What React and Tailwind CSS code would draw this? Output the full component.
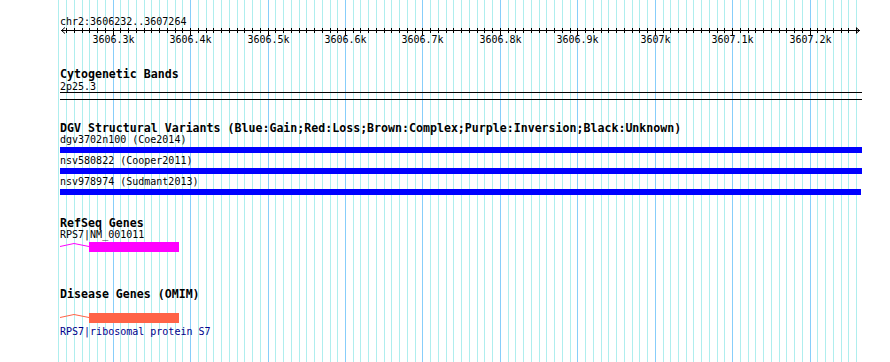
import React from "react";

const START = 3606232;
const px = (bp) => Math.floor(60.5 + (bp - START) * 0.77444);

const gridBps = [];
for (let b = 3606230; b <= 3607260; b += 10) gridBps.push(b);
const tickBps = gridBps.filter((b) => b >= 3606240);
const majors = [];
for (let b = 3606300; b <= 3607200; b += 100) majors.push(b);
const fmt = (b) => {
  const k = (b / 1000).toFixed(1);
  return (k.endsWith(".0") ? k.slice(0, -2) : k) + "k";
};

const MONO = "'DejaVu Sans Mono', 'Liberation Mono', monospace";

function Grid() {
  return (
    <svg className="absolute inset-0" width="890" height="362">
      {gridBps.map((b) => (
        <line
          key={b}
          x1={px(b) + 0.5}
          x2={px(b) + 0.5}
          y1={0}
          y2={362}
          stroke={b % 100 === 0 ? "#87cefa" : "#afeeee"}
          strokeWidth="1"
        />
      ))}
    </svg>
  );
}

function Ruler() {
  return (
    <svg width="890" height="48" className="block" style={{ fontFamily: MONO }}>
      <text x="60" y="25" fontSize="10" fill="#000">
        chr2:3606232..3607264
      </text>
      <line x1="61" x2="860" y1="30.5" y2="30.5" stroke="#000" />
      <polyline points="65,27.5 61.5,30.5 65,33.5" fill="none" stroke="#000" />
      <polyline points="856,27.5 859.5,30.5 856,33.5" fill="none" stroke="#000" />
      {tickBps.map((b) => (
        <line
          key={b}
          x1={px(b) + 0.5}
          x2={px(b) + 0.5}
          y1={28}
          y2={b % 100 === 0 ? 35 : 33}
          stroke="#000"
        />
      ))}
      {majors.map((b) => (
        <text key={b} x={px(b) + 0.5} y="43" fontSize="10" textAnchor="middle" fill="#000">
          {fmt(b)}
        </text>
      ))}
    </svg>
  );
}

function Title({ children, className = "" }) {
  return (
    <div className={"text-[11.6px] leading-[12px] font-bold text-black whitespace-nowrap " + className}>
      {children}
    </div>
  );
}

function Label({ children, className = "" }) {
  return (
    <div className={"text-[10px] leading-[11px] whitespace-nowrap " + className}>{children}</div>
  );
}

function Gene({ color }) {
  return (
    <svg width="802" height="10" className="block">
      <polyline points="0,4.5 14,1.5 29,4.5" fill="none" stroke={color} strokeWidth="1" />
      <rect x="29" y="0" width="90" height="10" fill={color} />
    </svg>
  );
}

export default function App() {
  return (
    <div
      className="relative w-[890px] h-[362px] bg-white overflow-hidden"
      style={{ fontFamily: MONO }}
    >
      <Grid />
      <div className="relative flex flex-col">
        <Ruler />
        <div className="flex flex-col pl-[60px]">
          <Title className="mt-[20px] leading-[13px]">Cytogenetic Bands</Title>
          <Label className="text-black">2p25.3</Label>
          <div className="w-[802px] h-[8px] border-y border-black" />

          <Title className="mt-[22px]">
            DGV Structural Variants (Blue:Gain;Red:Loss;Brown:Complex;Purple:Inversion;Black:Unknown)
          </Title>
          <Label className="text-black">dgv3702n100 (Coe2014)</Label>
          <div className="mt-[2px] w-[802px] h-[6px] bg-[#0000ff]" />
          <Label className="mt-[2px] text-black">nsv580822 (Cooper2011)</Label>
          <div className="mt-[2px] w-[802px] h-[6px] bg-[#0000ff]" />
          <Label className="mt-[2px] text-black">nsv978974 (Sudmant2013)</Label>
          <div className="mt-[2px] w-[801px] h-[6px] bg-[#0000ff]" />

          <Title className="mt-[22px]">RefSeq Genes</Title>
          <Label className="text-black">RPS7|NM_001011</Label>
          <div className="mt-[2px]">
            <Gene color="#ff00ff" />
          </div>

          <Title className="mt-[36px]">Disease Genes (OMIM)</Title>
          <div className="mt-[13px]">
            <Gene color="#ff6347" />
          </div>
          <Label className="mt-[3px] text-[#00008b]">RPS7|ribosomal protein S7</Label>
        </div>
      </div>
    </div>
  );
}
